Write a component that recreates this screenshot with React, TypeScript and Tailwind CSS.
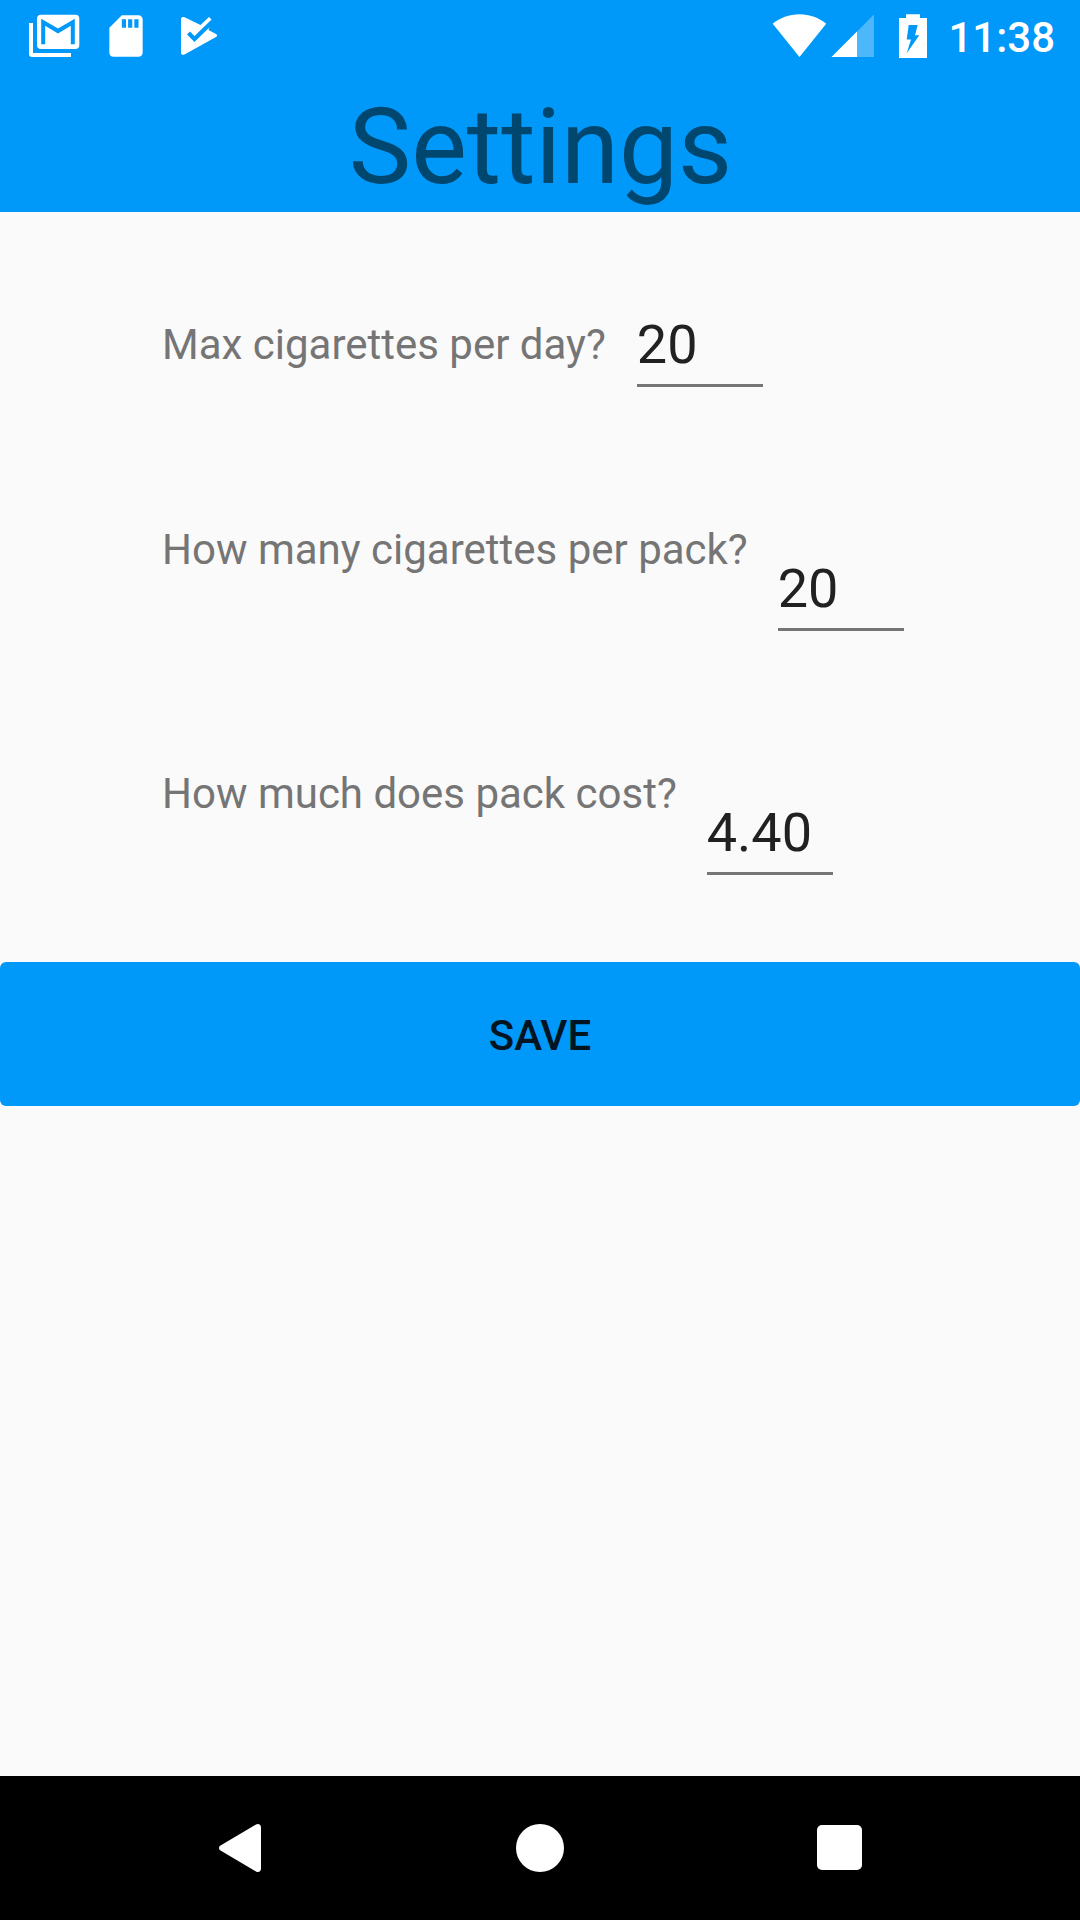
type Field = {
    id: string
    label: string
    value: string
    rowClass: string
    inputClass: string
}

const fields: Field[] = [
    { id: 'max', label: 'Max cigarettes per day?', value: '20', rowClass: 'mt-[107px] h-[68px]', inputClass: 'ml-[31px]' },
    { id: 'pack', label: 'How many cigarettes per pack?', value: '20', rowClass: 'mt-[137px] h-[107px]', inputClass: 'ml-[30px] mt-[39px]' },
    { id: 'cost', label: 'How much does pack cost?', value: '4.40', rowClass: 'mt-[137px] h-[107px]', inputClass: 'ml-[30px] mt-[39px]' },
]

function StatusBar() {
    return (
        <div className="h-[72px] flex items-start justify-between text-white">
            {/* Notifications */}
            <div className="flex pt-[11px] pl-[28px]">
                <svg aria-hidden="true" className="w-[52px] h-[50px]" viewBox="28 11 52 50">
                    <path fill="currentColor" d="M29 23h4v30h38v4H32a3 3 0 0 1-3-3z" />
                    <rect fill="currentColor" x="37" y="14.7" width="42.3" height="34.3" rx="4" />
                    <path fill="#0098f9" d="M41.200 18.800L58 28.500l16.800-9.700v25.500h-4V25.800L58 33.500l-12.800-7.700v18.500h-4z" />
                </svg>
                <svg aria-hidden="true" className="w-[50px] h-[50px] ml-[21px]" viewBox="0 0 24 24">
                    <path fill="currentColor" d="M18 2h-8L4.020 8 4 20c0 1.100.9 2 2 2h12c1.100 0 2-.9 2-2V4c0-1.100-.9-2-2-2zm-6 6h-2V4h2v4zm3 0h-2V4h2v4zm3 0h-2V4h2v4z" />
                </svg>
                <svg aria-hidden="true" className="w-[40px] h-[50px] ml-[28px]" viewBox="179 11 40 50" fill="none">
                    <path fill="currentColor" d="M181 19c0-2 2-2.500 3.500-1.700L200.500 25l8.500-8 2.500 2.500-3 10.500 7.500 4c1.500.8 1.500 2.200 0 3L184.500 54.500c-1.700.8-3.500.2-3.500-1.700z" />
                    <path stroke="#0098f9" strokeWidth="4.200" d="M188.500 33l6 6L212.500 21.500" />
                </svg>
            </div>

            {/* System icons */}
            <div className="flex pt-[11px] pr-[25px]">
                <svg aria-hidden="true" className="w-[54px] h-[50px]" viewBox="772 11 54 50">
                    <path fill="currentColor" d="M799.500 57L772.700 23.700C780 18 789 14.300 799.500 14.300S819 18 826.300 23.700z" />
                </svg>
                <svg aria-hidden="true" className="w-[43px] h-[50px] ml-[5px]" viewBox="831 11 43 50">
                    <path fill="currentColor" fillOpacity=".3" d="M831.500 57L874 14.500V57z" />
                    <path fill="currentColor" d="M831.500 57L857 31.500V57z" />
                </svg>
                <svg aria-hidden="true" className="w-[28px] h-[50px] ml-[25px]" viewBox="899 11 28 50">
                    <path fill="currentColor" d="M906 14.300h14V18h7v40h-28V18h7z" />
                    <path fill="#0098f9" d="M908.700 25h9l-2.700 10.300h4.300L906.700 53.300 911 39.500h-4.300z" />
                </svg>
                <span className="ml-[21px] mt-[2px] text-[42px] leading-[50px] font-medium">11:38</span>
            </div>
        </div>
    )
}

function SettingRow({ field }: { field: Field }) {
    return (
        <div className={`flex items-start pl-[162px] ${field.rowClass}`}>
            <label htmlFor={field.id} className="-mt-px text-[42px] leading-[54px] text-[#757575] whitespace-nowrap">
                {field.label}
            </label>
            <input
                id={field.id}
                defaultValue={field.value}
                className={`w-[126px] h-[68px] pb-[15px] text-[54px] leading-[50px] text-[#212121] border-b-[3px] border-[#757575] outline-none ${field.inputClass}`}
            />
        </div>
    )
}

function NavBar() {
    return (
        <nav className="h-[144px] bg-black text-white flex items-center pl-[219px]">
            <button aria-label="Back">
                <svg aria-hidden="true" className="w-[42px] h-[48px]" viewBox="0 0 42 48">
                    <path fill="currentColor" d="M1.500 21.500L37 .6c2.500-1.400 5 0 5 2.900v41c0 2.900-2.500 4.300-5 2.900L1.500 26.500c-2-1.200-2-3.800 0-5z" />
                </svg>
            </button>
            <button aria-label="Home" className="ml-[255px] w-[48px] h-[48px] rounded-full bg-white" />
            <button aria-label="Overview" className="ml-[253px] -mt-px w-[45px] h-[45px] rounded-[5px] bg-white" />
        </nav>
    )
}

export default function App() {
    return (
        <div className="w-[1080px] h-[1920px] flex flex-col bg-[#fafafa] font-[Roboto,sans-serif] overflow-hidden">
            <header className="h-[212px] bg-[#0098f9]">
                <StatusBar />
                <h1 className="pt-[2px] pl-px text-[105px] leading-[148px] text-center text-[#00476f]">Settings</h1>
            </header>

            <main className="flex-1">
                {fields.map((field) => (
                    <SettingRow key={field.id} field={field} />
                ))}
                <button className="mt-[87px] pt-[2px] w-full h-[144px] rounded-[6px] bg-[#0098f9] text-[42px] font-medium text-[#001421]">
                    SAVE
                </button>
            </main>

            <NavBar />
        </div>
    )
}
